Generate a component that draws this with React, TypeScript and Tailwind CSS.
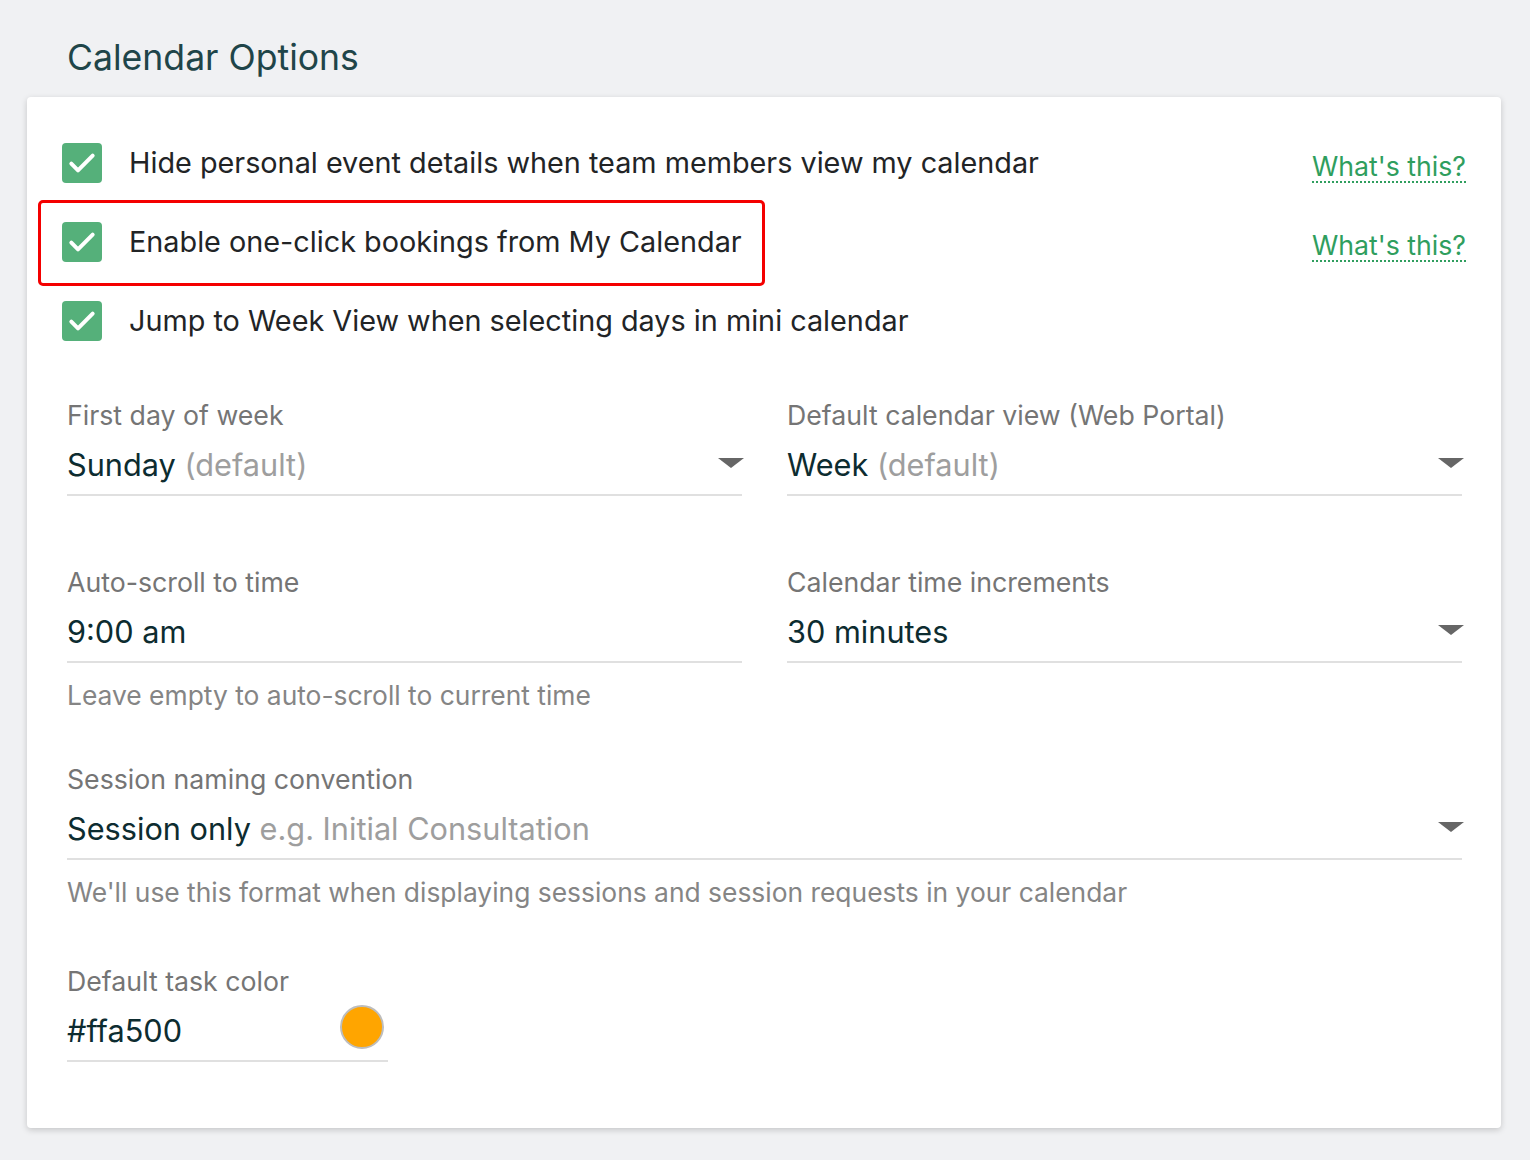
import React from 'react';

const font = { fontFamily: 'Inter, "Noto Sans", sans-serif' };

const Check: React.FC = () => (
    <div className="w-10 h-10 rounded-[4px] bg-[#55b07a] flex items-center justify-center shrink-0">
        <svg width="32" height="32" viewBox="0 0 24 24" fill="none">
            <path d="M4 12.5l5 5L20 6.5" stroke="white" strokeWidth="3" strokeLinecap="round" strokeLinejoin="round" />
        </svg>
    </div>
);

const Caret: React.FC = () => (
    <svg width="26" height="10" viewBox="0 0 26 10" className="shrink-0 mr-[-2px]">
        <path d="M0 0h26L13 10z" fill="#666" />
    </svg>
);

const CheckRow: React.FC<{ label: string; help?: boolean }> = ({ label, help }) => (
    <div className="h-[79px] flex items-center">
        <div className="ml-[-5px]">
            <Check />
        </div>
        <span className="ml-[27px] text-[28.8px] text-[#222426]">{label}</span>
        {help && (
            <a
                href="#"
                className="ml-auto mr-[-4px] mt-[8px] text-[26.7px] leading-[30px] text-[#2f9e5e] border-b-2 border-dotted border-[#2f9e5e]"
            >
                What's this?
            </a>
        )}
    </div>
);

const Field: React.FC<{
    label: string;
    value: string;
    hint?: string;
    select?: boolean;
    helper?: string;
    className?: string;
    swatch?: boolean;
}> = ({ label, value, hint, select, helper, className = '', swatch }) => (
    <div className={className}>
        <div className="text-[26.7px] leading-[34px] text-[#757575]">{label}</div>
        <div className="h-[64px] flex items-center border-b-2 border-[#e0e0e0]">
            <span className="pt-[4px] text-[30.7px] text-[#0d2c30]">
                {value}
                {hint && <span className="text-[#9e9e9e]"> {hint}</span>}
            </span>
            <div className="ml-auto flex items-center">
                {select && <Caret />}
                {swatch && <div className="w-[44px] h-[44px] rounded-full bg-[#ffa500] border-2 border-[#bdbdbd] mr-[4px] mt-[-4px]" />}
            </div>
        </div>
        {helper && <div className="mt-[15px] text-[26.4px] leading-[34px] text-[#858585]">{helper}</div>}
    </div>
);

export default function App() {
    return (
        <div className="min-h-screen bg-[#f0f1f3] pl-[27px] pr-[29px] pt-[38px] pb-[32px]" style={font}>
            <h1 className="ml-[40px] text-[35.6px] leading-[40px] text-[#1f4549]">Calendar Options</h1>

            <div className="mt-[19px] bg-white rounded-[4px] shadow-[0_2px_6px_rgba(0,0,0,0.18)] pl-[40px] pr-[39px] pt-[26px] pb-[66px]">
                <CheckRow label="Hide personal event details when team members view my calendar" help />
                <div className="relative">
                    <CheckRow label="Enable one-click bookings from My Calendar" help />
                    <div className="absolute left-[-29px] top-[-2px] w-[727px] h-[86px] border-[3px] border-[#f40000] rounded-[5px] pointer-events-none" />
                </div>
                <CheckRow label="Jump to Week View when selecting days in mini calendar" />

                <div className="mt-[38px] grid grid-cols-2 gap-x-[45px]">
                    <Field label="First day of week" value="Sunday" hint="(default)" select />
                    <Field label="Default calendar view (Web Portal)" value="Week" hint="(default)" select />
                </div>

                <div className="mt-[69px] grid grid-cols-2 gap-x-[45px] items-start">
                    <Field label="Auto-scroll to time" value="9:00 am" helper="Leave empty to auto-scroll to current time" />
                    <Field label="Calendar time increments" value="30 minutes" select />
                </div>

                <Field
                    className="mt-[50px]"
                    label="Session naming convention"
                    value="Session only"
                    hint="e.g. Initial Consultation"
                    select
                    helper="We'll use this format when displaying sessions and session requests in your calendar"
                />

                <Field className="mt-[55px] w-[321px]" label="Default task color" value="#ffa500" swatch />
            </div>
        </div>
    );
}
